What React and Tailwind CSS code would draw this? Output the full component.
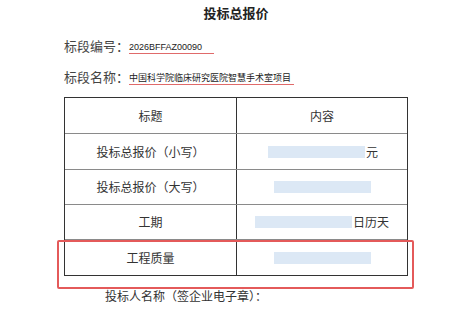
import React from 'react';

const FONT = { fontFamily: '"Noto Sans CJK SC", "Noto Sans", sans-serif' };

const ROWS = [
  { label: '投标总报价（小写）', bar: 'ml-[31px]', suffix: '元', h: 'h-[36px]' },
  { label: '投标总报价（大写）', bar: 'ml-[37px]', suffix: null, h: 'h-[35px]' },
  { label: '工期', bar: 'ml-[18px]', suffix: '日历天', h: 'h-[35px]' },
  { label: '工程质量', bar: 'ml-[37px]', suffix: null, h: 'h-[35px]' },
];

function Row({ label, bar, suffix, h, last }) {
  return (
    <div className={`flex ${h} ${last ? '' : 'border-b border-[#8a8a8a]'}`}>
      <div className="flex w-[172px] items-center justify-center border-r border-[#333] text-[12px] text-[#333]">
        {label}
      </div>
      <div className="flex flex-1 items-center text-[12px] text-[#333]">
        <span className={`${bar} h-[12px] w-[97px] bg-[#dce8f5]`} />
        {suffix && <span className="ml-[1px]">{suffix}</span>}
      </div>
    </div>
  );
}

export default function App() {
  return (
    <div className="h-[314px] w-[462px] overflow-hidden bg-white" style={FONT}>
      <div className="ml-[64px] w-[344px]">
        <h1 className="pt-[4px] text-center text-[13px] font-bold leading-[18px] text-[#222]">投标总报价</h1>

        <div className="mt-[15px] flex items-end text-[13px] leading-[18px] text-[#444]">
          <span>标段编号：</span>
          <span className="mb-[1px] w-[85px] border-b border-[#e06a6a] text-[9px] leading-[12px] text-[#222]" style={{ fontFamily: '"Liberation Sans", sans-serif' }}>
            2026BFFAZ00090
          </span>
        </div>

        <div className="mt-[13px] flex items-end text-[13px] leading-[18px] text-[#444]">
          <span>标段名称：</span>
          <span className="mb-[1px] w-[165px] border-b border-[#e06a6a] text-[9px] leading-[12px] text-[#222]">
            中国科学院临床研究医院智慧手术室项目
          </span>
        </div>

        <div className="relative mt-[11px] border border-[#333]">
          <div className="flex h-[36px] border-b border-[#8a8a8a]">
            <div className="flex w-[172px] items-center justify-center border-r border-[#333] text-[12px] text-[#333]">标题</div>
            <div className="flex flex-1 items-center justify-center text-[12px] text-[#333]">内容</div>
          </div>
          {ROWS.map((r, i) => (
            <Row key={r.label} {...r} last={i === ROWS.length - 1} />
          ))}
          <div className="absolute left-[-8px] top-[142px] h-[49px] w-[357px] rounded-[2px] border-2 border-[#e45a5a]" />
        </div>

        <p className="ml-[41px] mt-[12px] text-[12px] leading-[16px] text-[#333]">投标人名称（签企业电子章）：</p>
      </div>
    </div>
  );
}
